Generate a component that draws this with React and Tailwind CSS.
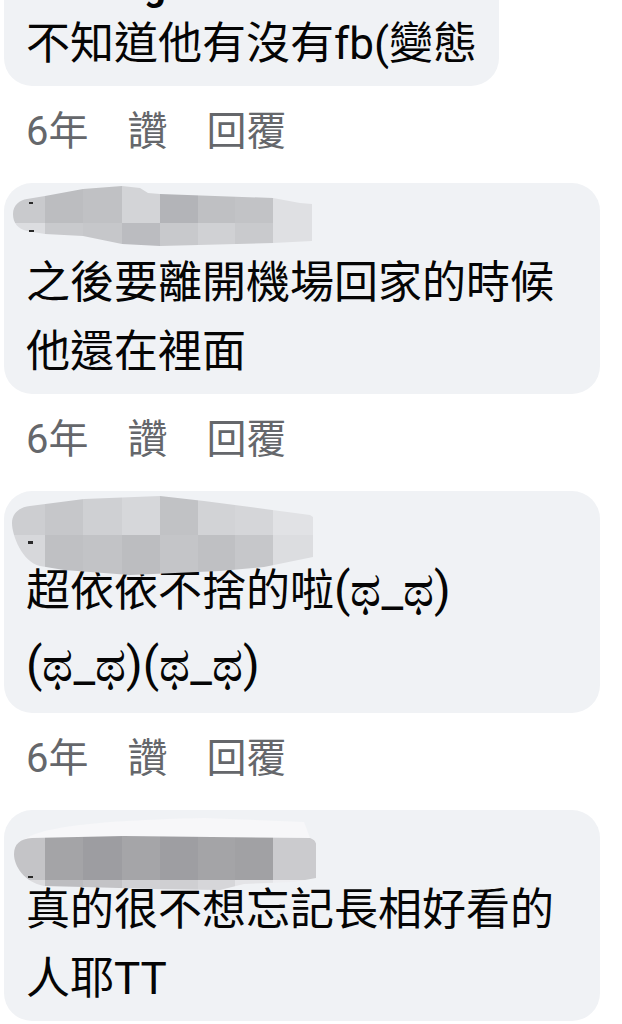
import React from 'react';

// blurred (pixelated) names, drawn in bubble coordinates
const blurs = {
  a: {
    h: 70,
    clip: 'M9 31 C9 22 16 17 23 16 L41 13 L79 6 L118 3 L136 5 L144 10 L156 11 L269 15 L296 20 L308 21 L308 58 L269 60 L156 63 L118 61 L79 53 L41 51 L23 48 C14 46 9 40 9 31 Z',
    cols: [0, 41, 79, 118, 156, 194, 231, 269, 312],
    rows: [0, 40, 70],
    colors: [
      ['#c9cacd', '#bcbdc0', '#c0c1c4', '#d3d4d7', '#b3b4b8', '#bfc0c3', '#c2c3c6', '#dfe0e3'],
      ['#dcdde0', '#c9cacd', '#c6c7ca', '#bbbcc0', '#c8c9cc', '#d0d1d4', '#c9cacd', '#dfe0e3'],
    ],
    marks: [[25, 19, 4, 2], [25, 47, 5, 2]],
  },
  b: {
    h: 90,
    clip: 'M8 32 C8 22 16 16 26 15 L80 8 L156 5 L200 10 L306 24 L309 26 L309 66 L260 76 L216 80 L126 84 L60 79 L36 75 C18 71 8 44 8 32 Z',
    cols: [0, 41, 79, 118, 156, 194, 231, 269, 312],
    rows: [0, 44, 90],
    colors: [
      ['#cdced1', '#c6c7ca', '#cfd0d3', '#d6d7da', '#c1c2c5', '#d2d3d6', '#d5d6d9', '#e1e2e5'],
      ['#d7d8db', '#bfc0c3', '#c2c3c6', '#bcbdc0', '#c4c5c8', '#bfc0c3', '#c6c7ca', '#dcdde0'],
    ],
    marks: [[24, 50, 5, 3]],
  },
  c: {
    h: 90,
    clip: 'M10 44 C10 34 16 29 28 28 L120 26 L306 28 C312 30 313 34 312 40 L312 68 L290 72 L240 74 L216 80 L150 79 L80 77 L40 76 C20 72 10 56 10 44 Z',
    cols: [0, 41, 79, 118, 156, 194, 231, 269, 312],
    rows: [0, 70, 90],
    colors: [
      ['#c4c4c7', '#a4a4a7', '#9d9da1', '#a5a5a8', '#9e9ea2', '#a4a4a7', '#a1a1a4', '#cbcbce'],
      ['#dcdcdf', '#bdbdc0', '#c3c3c6', '#d1d1d4', '#cfcfd2', '#d6d6d9', '#e4e4e7', '#eeeef1'],
    ],
    fringe: 'M20 30 C40 14 120 10 200 8 L300 12 L306 28 L28 28 Z',
    marks: [[24, 66, 5, 2]],
  },
};

const NameBlur = ({ id }) => {
  const b = blurs[id];
  return (
    <svg width="320" height={b.h} className="absolute left-0 top-0" viewBox={`0 0 320 ${b.h}`}>
      <defs>
        <clipPath id={`clip-${id}`}>
          <path d={b.clip} />
        </clipPath>
      </defs>
      {b.fringe && <path d={b.fringe} fill="#f7f7f9" />}
      <g clipPath={`url(#clip-${id})`}>
        {b.colors.map((row, r) =>
          row.map((c, i) => (
            <rect
              key={`${r}-${i}`}
              x={b.cols[i]}
              y={b.rows[r]}
              width={b.cols[i + 1] - b.cols[i]}
              height={b.rows[r + 1] - b.rows[r]}
              fill={c}
            />
          ))
        )}
      </g>
      {b.marks.map((m, i) => (
        <rect key={i} x={m[0]} y={m[1]} width={m[2]} height={m[3]} fill="#2a2a2a" />
      ))}
    </svg>
  );
};

const Cry = () => <span className="text-[48px] leading-[60px]">(ಥ_ಥ)</span>;

const comments = [
  { id: 1, lines: ['不知道他有沒有fb(變態'], first: true },
  { id: 2, lines: ['之後要離開機場回家的時候', '他還在裡面'], blur: 'a' },
  {
    id: 3,
    lines: [
      <>超依依不捨的啦<Cry /></>,
      <><Cry /><Cry /></>,
    ],
    blur: 'b',
    tall: true,
  },
  { id: 4, lines: ['真的很不想忘記長相好看的', '人耶TT'], blur: 'c' },
];

const Meta = () => (
  <div className="mt-[22px] mb-[27px] flex h-[48px] items-center gap-[39px] pl-[22px] text-[40px] leading-[48px] text-[#65676b]">
    <span>6年</span>
    <span>讚</span>
    <span>回覆</span>
  </div>
);

const App = () => {
  return (
    <div className="h-[1024px] overflow-hidden bg-white pl-[4px] pr-[22px] font-['Roboto','Noto_Sans_CJK_TC',sans-serif] text-[#050505]">
      {comments.map((c, idx) => (
        <div key={c.id}>
          <div
            className={`rounded-[28px] bg-[#f0f2f5] px-[22px] pb-[7px] ${c.first ? '-mt-[56px] w-fit' : 'w-full'}`}
          >
            <div className="relative -ml-[22px] h-[66px]">
              {c.blur ? (
                <NameBlur id={c.blur} />
              ) : (
                <div className="pl-[140px] pt-[24px] text-[38px] font-bold leading-[38px]">g</div>
              )}
            </div>
            <p className="text-[44px] leading-[69px]">
              {c.lines.map((line, i) => (
                <span
                  key={i}
                  className={`block ${c.tall && i > 0 ? 'leading-[80px]' : ''}`}
                >
                  {line}
                </span>
              ))}
            </p>
          </div>
          {idx < comments.length - 1 && <Meta />}
        </div>
      ))}
    </div>
  );
};

export default App;
